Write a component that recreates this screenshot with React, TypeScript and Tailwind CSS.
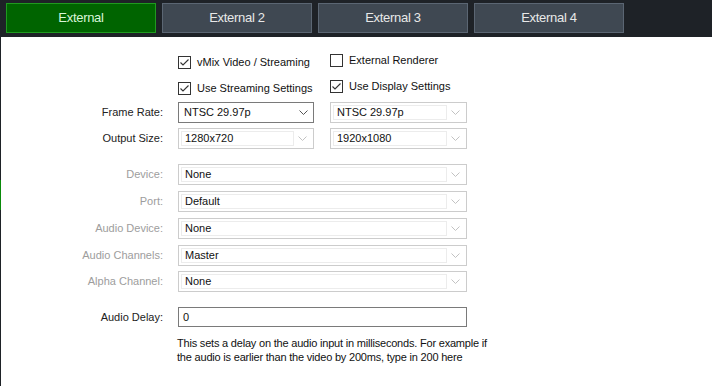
import React from 'react';

const tabs = ['External', 'External 2', 'External 3', 'External 4'];

function Chevron({ light }: { light?: boolean }) {
  return (
    <svg width="9" height="5" viewBox="0 0 9 5">
      <path d="M0.5 0.5 L4.5 4.5 L8.5 0.5" fill="none" stroke={light ? '#c2c2c2' : '#555'} strokeWidth="1" />
    </svg>
  );
}

function Check({ checked, label }: { checked?: boolean; label: string }) {
  return (
    <div className="flex items-center">
      <div className="w-[13px] h-[13px] border border-[#333] bg-white flex items-center justify-center">
        {checked && (
          <svg width="11" height="11" viewBox="0 0 11 11">
            <path d="M1.5 5.5 L4 8 L9.5 2.5" fill="none" stroke="#333" strokeWidth="1.1" />
          </svg>
        )}
      </div>
      <span className="ml-[6px]">{label}</span>
    </div>
  );
}

function Select({ value, active, width }: { value: string; active?: boolean; width: string }) {
  if (active) {
    return (
      <div className={`${width} h-[21px] border border-[#7a7a7a] flex items-center justify-between pl-[5px] pr-[5px]`}>
        <span>{value}</span>
        <Chevron />
      </div>
    );
  }
  return (
    <div className={`${width} h-[21px] border border-[#cccccc] flex items-center p-[2px]`}>
      <div className="flex-1 h-full border border-[#ececec] flex items-center pl-[3px]">{value}</div>
      <div className="w-[17px] flex justify-center">
        <Chevron light />
      </div>
    </div>
  );
}

function Row({ label, dim, children, className }: { label: string; dim?: boolean; children: React.ReactNode; className?: string }) {
  return (
    <div className={`flex items-center ${className ?? ''}`}>
      <div className={`w-[162px] text-right ${dim ? 'text-[#9d9d9d]' : 'text-[#222]'}`}>{label}</div>
      <div className="ml-[15px] flex gap-[16px]">{children}</div>
    </div>
  );
}

export default function App() {
  return (
    <div className="w-[712px] h-[386px] bg-white flex flex-col overflow-hidden text-[11px] text-[#111]" style={{ fontFamily: '"Liberation Sans", Arial, sans-serif' }}>
      <div className="h-[37px] bg-[#1e2227] flex gap-[6px] pl-[6px] pt-[3px] shrink-0">
        {tabs.map((t, i) => (
          <div
            key={t}
            className={`w-[150px] h-[30px] flex items-center justify-center text-[13px] tracking-[-0.3px] border ${
              i === 0 ? 'bg-[#006400] border-[#1f9a1f] text-[#d8f5d8]' : 'bg-[#3f4852] border-[#5b6673] text-[#e8e8e8]'
            }`}
          >
            {t}
          </div>
        ))}
      </div>

      <div className="flex-1 flex">
        <div className="w-px bg-[#1e2227] flex flex-col">
          <div className="h-[143px]" />
          <div className="h-[30px] bg-[#0a8a0a]" />
        </div>

        <div className="flex-1 flex flex-col pt-[17px]">
          <div className="flex h-[13px] pl-[177px]">
            <div className="w-[152px]">
              <Check checked label="vMix Video / Streaming" />
            </div>
            <Check label="External Renderer" />
          </div>
          <div className="flex h-[13px] mt-[13px] pl-[177px]">
            <div className="w-[152px]">
              <Check checked label="Use Streaming Settings" />
            </div>
            <Check checked label="Use Display Settings" />
          </div>

          <Row label="Frame Rate:" className="mt-[9px]">
            <Select active value="NTSC 29.97p" width="w-[136px]" />
            <Select value="NTSC 29.97p" width="w-[137px]" />
          </Row>
          <Row label="Output Size:" className="mt-[5px]">
            <Select value="1280x720" width="w-[136px]" />
            <Select value="1920x1080" width="w-[137px]" />
          </Row>

          <Row label="Device:" dim className="mt-[15px]">
            <Select value="None" width="w-[289px]" />
          </Row>
          <Row label="Port:" dim className="mt-[6px]">
            <Select value="Default" width="w-[289px]" />
          </Row>
          <Row label="Audio Device:" dim className="mt-[6px]">
            <Select value="None" width="w-[289px]" />
          </Row>
          <Row label="Audio Channels:" dim className="mt-[6px]">
            <Select value="Master" width="w-[289px]" />
          </Row>
          <Row label="Alpha Channel:" dim className="mt-[5px]">
            <Select value="None" width="w-[289px]" />
          </Row>

          <Row label="Audio Delay:" className="mt-[15px]">
            <div className="w-[289px] h-[20px] border border-[#7a7a7a] flex items-center pl-[4px]">0</div>
          </Row>

          <p className="ml-[176px] mt-[9px] leading-[14px] text-[#111] whitespace-nowrap tracking-[-0.2px]">
            This sets a delay on the audio input in milliseconds. For example if
            <br />
            the audio is earlier than the video by 200ms, type in 200 here
          </p>
        </div>
      </div>
    </div>
  );
}
